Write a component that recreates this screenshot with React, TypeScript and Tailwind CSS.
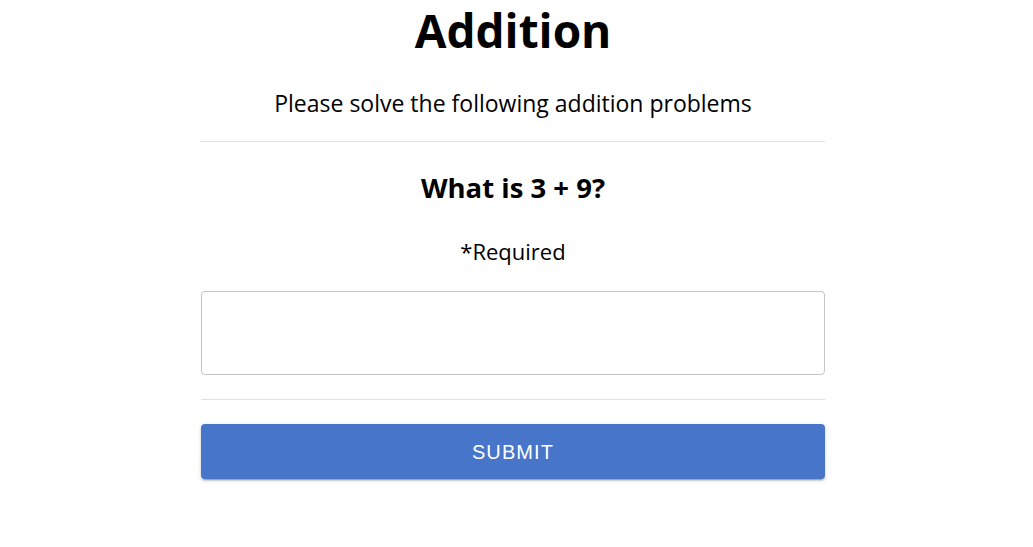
import React from "react";

export default function App() {
  return (
    <div className="min-h-[547px] bg-white pr-[7px] text-black" style={{ fontFamily: '"Open Sans", "Noto Sans", sans-serif' }}>
      <div className="mx-auto flex w-[624px] flex-col items-center">
        <h1 className="text-[46px] font-bold leading-[60px]">Addition</h1>
        <p className="mt-[27px] text-[23px] leading-[32px]">Please solve the following addition problems</p>
        <div className="mt-[22px] h-px w-full bg-[#e0e0e0]" />
        <h2 className="mt-[28px] text-[27.5px] font-bold leading-[36px]">What is 3 + 9?</h2>
        <p className="mt-[30px] text-[22px] leading-[30px]">*Required</p>
        <input
          type="text"
          className="mt-[25px] h-[84px] w-full rounded-[4px] border border-[#c4c4c4] px-3 outline-none"
        />
        <div className="mt-[24px] h-px w-full bg-[#e0e0e0]" />
        <button
          className="mt-[24px] h-[55px] w-full rounded-[4px] bg-[#4775c9] text-[20px] tracking-[1.1px] text-white shadow-[0_3px_1px_-2px_rgba(0,0,0,0.2),0_2px_2px_0_rgba(0,0,0,0.14),0_1px_5px_0_rgba(0,0,0,0.12)]"
          style={{ fontFamily: '"Liberation Sans", Arial, sans-serif' }}
        >
          SUBMIT
        </button>
      </div>
    </div>
  );
}
